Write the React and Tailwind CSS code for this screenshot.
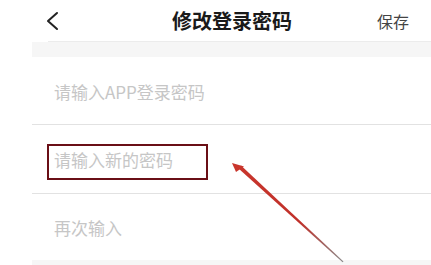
export default function App() {
  const font = { fontFamily: '"Noto Sans CJK SC", "Noto Sans", sans-serif' };
  return (
    <div className="relative w-[431px] h-[265px] bg-white overflow-hidden" style={font}>
      {/* header */}
      <div className="h-[41px] flex items-center">
        <svg className="ml-[45px] w-[14px] h-[20px]" viewBox="0 0 14 20" fill="none">
          <path d="M12 2 L3 10 L12 18" stroke="#222" strokeWidth="2" strokeLinecap="round" strokeLinejoin="round" />
        </svg>
        <div className="ml-[113px] text-[20px] leading-none font-bold text-[#1a1a1a]">修改登录密码</div>
        <div className="ml-auto mr-[22px] text-[16px] leading-none text-[#444]">保存</div>
      </div>
      <div className="ml-[48px] h-px bg-[#ececec]" />
      {/* body */}
      <div className="ml-[32px] flex flex-col">
        <div className="h-[15px] bg-[#f6f6f6]" />
        <div className="h-[67px] flex items-center pl-[22px] pt-[2px] text-[17px] text-[#c6c6c6]">请输入APP登录密码</div>
        <div className="h-px bg-[#e2e2e2]" />
        <div className="h-[68px] flex items-center pl-[22px] pt-[2px] text-[17px] text-[#c6c6c6]">请输入新的密码</div>
        <div className="h-px bg-[#e2e2e2]" />
        <div className="h-[66px] flex items-center pl-[22px] pt-[2px] text-[17px] text-[#c6c6c6]">再次输入</div>
        <div className="h-[10px] bg-[#f6f6f6]" />
      </div>
      {/* annotation box */}
      <div className="absolute left-[47px] top-[144px] w-[161px] h-[36px] border-2 border-[#6a0f16]" />
      {/* annotation arrow */}
      <svg className="absolute left-0 top-0" width="431" height="265" viewBox="0 0 431 265">
        <defs>
          <linearGradient id="ag" x1="232" y1="163" x2="343" y2="262" gradientUnits="userSpaceOnUse">
            <stop offset="0" stopColor="#c9362c" />
            <stop offset="0.6" stopColor="#c0302a" />
            <stop offset="1" stopColor="#8a8a8a" />
          </linearGradient>
        </defs>
        <polygon points="238.5,168.5 241,165.5 343.5,261.6 342.6,262.3" fill="url(#ag)" />
        <polygon points="232,163 244,166.5 236,172" fill="#c9362c" />
      </svg>
    </div>
  );
}
